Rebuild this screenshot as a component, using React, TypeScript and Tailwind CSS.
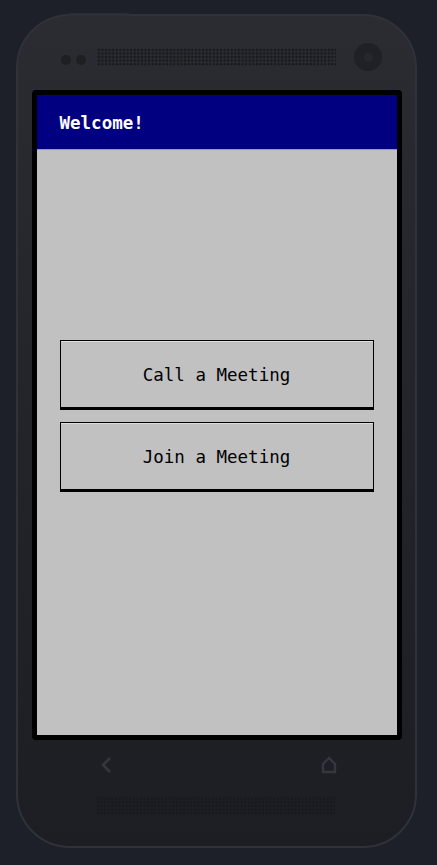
import React from "react";

const mono = { fontFamily: '"DejaVu Sans Mono", "Liberation Mono", monospace' };

function Grille() {
  return (
    <div className="h-[18px] w-[239px] bg-[radial-gradient(circle,#16181c_1.1px,transparent_1.5px)] bg-size-[3.6px_3.6px]" />
  );
}

function MenuButton({ text }: { text: string }) {
  return (
    <button
      className="flex h-[70px] w-full items-center justify-center border border-b-[3px] border-black bg-[#c1c1c1] pt-[2px] text-[17.5px] text-black shadow-[inset_0_1px_0_#dedede]"
      style={mono}
    >
      {text}
    </button>
  );
}

export default function App() {
  return (
    <div className="flex h-[865px] w-[437px] justify-start bg-[#1d2028] pl-[16px] pt-[14px]">
      <div className="relative flex h-[834px] w-[401px] flex-col items-center rounded-[54px] border-2 border-[#2f3239] bg-gradient-to-b from-[#2a2c31] via-[#22242a] to-[#1c1e24]">
        {/* top bump */}
        <div className="absolute left-[50px] top-[-3px] h-[3px] w-[62px] rounded-t-[3px] bg-[#2c2f35]" />

        {/* top: sensors, speaker, camera */}
        <div className="flex h-[74px] w-full items-center pl-[43px] pr-[33px] pt-[8px]">
          <div className="flex gap-[5px] pt-[5px]">
            <div className="h-[10px] w-[10px] rounded-full bg-[#1d1f23]" />
            <div className="h-[10px] w-[10px] rounded-full bg-[#1d1f23]" />
          </div>
          <div className="ml-[11px]">
            <Grille />
          </div>
          <div className="ml-auto flex h-[28px] w-[28px] items-center justify-center rounded-full bg-[#1f2126]">
            <div className="h-[9px] w-[9px] rounded-full bg-[#25272d]" />
          </div>
        </div>

        {/* screen */}
        <div className="flex h-[650px] w-[370px] flex-col rounded-[4px] border-[5px] border-black bg-[#c1c1c1]">
          <div className="flex h-[55px] items-center border-b border-[#9a9a9a] bg-[#000080] pl-[23px] pt-[2px]">
            <span className="text-[17.5px] font-bold text-white" style={mono}>
              Welcome!
            </span>
          </div>
          <div className="flex flex-col gap-[12px] px-[23px] pt-[190px]">
            <MenuButton text="Call a Meeting" />
            <MenuButton text="Join a Meeting" />
          </div>
        </div>

        {/* nav buttons */}
        <div className="flex h-[50px] w-full items-center justify-between pl-[82px] pr-[78px]">
          <svg width="14" height="18" viewBox="0 0 14 18" fill="none">
            <path d="M10 2 L3 9 L10 16" stroke="#34373e" strokeWidth="2.6" />
          </svg>
          <svg width="16" height="18" viewBox="0 0 16 18" fill="none">
            <path d="M2 8 L8 2 L14 8 V16 H2 Z" stroke="#34373e" strokeWidth="2.4" strokeLinejoin="miter" />
          </svg>
        </div>

        {/* bottom speaker */}
        <div className="mt-[7px] mr-[2px]">
          <Grille />
        </div>
      </div>
    </div>
  );
}
